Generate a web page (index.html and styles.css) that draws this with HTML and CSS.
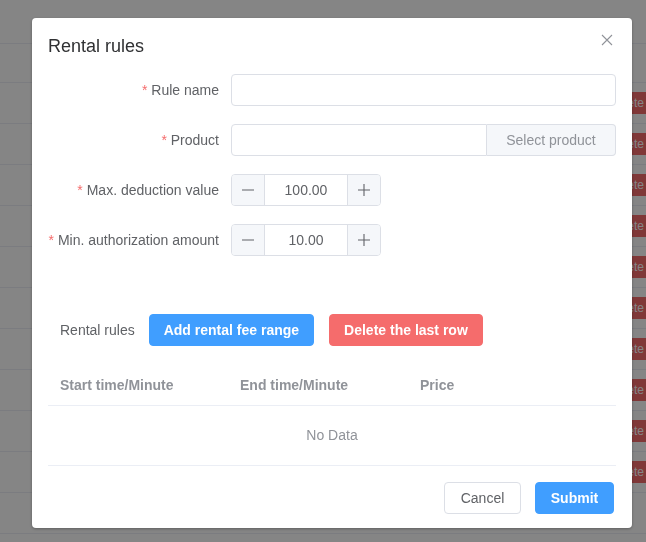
FILE: index.html
```html
<!DOCTYPE html>
<html lang="en">
<head>
  <meta charset="UTF-8" />
  <title>Rental rules</title>
  <link rel="stylesheet" href="styles.css">
</head>
<body>

  <div class="page">
    <div class="page-head"></div>
    <div class="page-row page-row-first"></div>
    <div class="page-row"><span class="row-btn">Delete</span></div>
    <div class="page-row"><span class="row-btn">Delete</span></div>
    <div class="page-row"><span class="row-btn">Delete</span></div>
    <div class="page-row"><span class="row-btn">Delete</span></div>
    <div class="page-row"><span class="row-btn">Delete</span></div>
    <div class="page-row"><span class="row-btn">Delete</span></div>
    <div class="page-row"><span class="row-btn">Delete</span></div>
    <div class="page-row"><span class="row-btn">Delete</span></div>
    <div class="page-row"><span class="row-btn">Delete</span></div>
    <div class="page-row"><span class="row-btn">Delete</span></div>
    <div class="page-row"></div>
  </div>

  <div class="overlay">
    <div class="dialog">
      <div class="dialog-header">
        <span class="dialog-title">Rental rules</span>
        <button class="dialog-close" aria-label="Close">
          <svg width="12" height="12" viewBox="0 0 12 12">
            <path d="M1 1L11 11M11 1L1 11" stroke="#909399" stroke-width="1.1" fill="none"/>
          </svg>
        </button>
      </div>

      <form class="form">
        <div class="form-item">
          <label class="form-label"><span class="req">*</span> Rule name</label>
          <div class="form-content">
            <input class="input" type="text" />
          </div>
        </div>

        <div class="form-item">
          <label class="form-label"><span class="req">*</span> Product</label>
          <div class="form-content">
            <div class="input-group">
              <input class="input input-left" type="text" />
              <span class="input-append">Select product</span>
            </div>
          </div>
        </div>

        <div class="form-item">
          <label class="form-label"><span class="req">*</span> Max. deduction value</label>
          <div class="form-content">
            <div class="number">
              <span class="number-btn minus">
                <svg width="14" height="14" viewBox="0 0 14 14"><path d="M1 7H13" stroke="#606266" stroke-width="1.1"/></svg>
              </span>
              <span class="number-value">100.00</span>
              <span class="number-btn plus">
                <svg width="14" height="14" viewBox="0 0 14 14"><path d="M1 7H13M7 1V13" stroke="#606266" stroke-width="1.1"/></svg>
              </span>
            </div>
          </div>
        </div>

        <div class="form-item">
          <label class="form-label"><span class="req">*</span> Min. authorization amount</label>
          <div class="form-content">
            <div class="number">
              <span class="number-btn minus">
                <svg width="14" height="14" viewBox="0 0 14 14"><path d="M1 7H13" stroke="#606266" stroke-width="1.1"/></svg>
              </span>
              <span class="number-value">10.00</span>
              <span class="number-btn plus">
                <svg width="14" height="14" viewBox="0 0 14 14"><path d="M1 7H13M7 1V13" stroke="#606266" stroke-width="1.1"/></svg>
              </span>
            </div>
          </div>
        </div>
      </form>

      <div class="rules-bar">
        <span class="rules-label">Rental rules</span>
        <button class="btn btn-primary">Add rental fee range</button>
        <button class="btn btn-danger">Delete the last row</button>
      </div>

      <table class="rules-table">
        <thead>
          <tr>
            <th>Start time/Minute</th>
            <th>End time/Minute</th>
            <th>Price</th>
          </tr>
        </thead>
        <tbody>
          <tr>
            <td colspan="3" class="empty">No Data</td>
          </tr>
        </tbody>
      </table>

      <div class="dialog-footer">
        <button class="btn btn-default">Cancel</button>
        <button class="btn btn-primary">Submit</button>
      </div>
    </div>
  </div>

</body>
</html>
```

FILE: styles.css
```css
* {
  box-sizing: border-box;
}

html, body {
  height: 100%;
}

body {
  margin: 0;
  font-family: "Liberation Sans", Arial, Helvetica, sans-serif;
  font-size: 14px;
  color: #606266;
  background: #fff;
  overflow: hidden;
}

/* page behind the dialog */
.page-head {
  height: 44px;
  border-bottom: 1px solid #ebeef5;
}

.page-row {
  height: 41px;
  border-bottom: 1px solid #ebeef5;
  display: flex;
  align-items: center;
  justify-content: flex-end;
}

.page-row-first {
  height: 39px;
}

.row-btn {
  background: #f56c6c;
  color: #fff;
  font-size: 12px;
  height: 22px;
  line-height: 22px;
  padding: 0 7px;
  border-radius: 3px;
  margin-right: -5px;
}

/* modal */
.overlay {
  position: fixed;
  inset: 0;
  background: rgba(0, 0, 0, 0.48);
}

.dialog {
  width: 600px;
  margin: 18px 0 0 32px;
  background: #fff;
  border-radius: 4px;
  box-shadow: 0 1px 3px rgba(0, 0, 0, 0.3);
  padding: 16px 16px 14px;
}

.dialog-header {
  position: relative;
  height: 24px;
  margin-bottom: 16px;
}

.dialog-title {
  font-size: 18px;
  line-height: 24px;
  color: #303133;
}

.dialog-close {
  position: absolute;
  top: -2px;
  right: 1px;
  border: none;
  background: none;
  padding: 0;
  width: 16px;
  height: 16px;
  display: flex;
  align-items: center;
  justify-content: center;
  cursor: pointer;
}

.form-item {
  display: flex;
  align-items: center;
  height: 32px;
  margin-bottom: 18px;
}

.form-label {
  width: 183px;
  padding-right: 12px;
  text-align: right;
  flex-shrink: 0;
  color: #606266;
}

.req {
  color: #f56c6c;
}

.form-content {
  flex: 1;
}

.input {
  width: 100%;
  height: 32px;
  border: 1px solid #dcdfe6;
  border-radius: 4px;
  padding: 0 15px;
  font: inherit;
  color: #606266;
  outline: none;
}

.input-group {
  display: flex;
}

.input-left {
  border-radius: 4px 0 0 4px;
}

.input-append {
  flex-shrink: 0;
  width: 129px;
  height: 32px;
  line-height: 30px;
  text-align: center;
  background: #f5f7fa;
  color: #909399;
  border: 1px solid #dcdfe6;
  border-left: none;
  border-radius: 0 4px 4px 0;
}

.number {
  display: flex;
  width: 150px;
  height: 32px;
  border: 1px solid #dcdfe6;
  border-radius: 4px;
  overflow: hidden;
}

.number-btn {
  width: 33px;
  background: #f5f7fa;
  display: flex;
  align-items: center;
  justify-content: center;
}

.minus {
  border-right: 1px solid #dcdfe6;
}

.plus {
  border-left: 1px solid #dcdfe6;
}

.number-value {
  flex: 1;
  text-align: center;
  line-height: 30px;
  color: #606266;
}

/* rental rules */
.rules-bar {
  display: flex;
  align-items: center;
  margin-top: 58px;
  padding-left: 12px;
}

.rules-label {
  margin-right: 14px;
}

.btn {
  height: 32px;
  padding: 0 14px;
  border-radius: 4px;
  border: 1px solid transparent;
  font: inherit;
  font-weight: bold;
  cursor: pointer;
}

.btn + .btn {
  margin-left: 15px;
}

.btn-primary {
  background: #409eff;
  border-color: #409eff;
  color: #fff;
}

.btn-danger {
  background: #f56c6c;
  border-color: #f56c6c;
  color: #fff;
}

.btn-default {
  background: #fff;
  border-color: #dcdfe6;
  color: #606266;
  font-weight: normal;
  width: 77px;
  padding: 0;
}

.rules-table {
  width: 100%;
  border-collapse: collapse;
  margin-top: 19px;
}

.rules-table th {
  height: 40px;
  width: 180px;
  text-align: left;
  padding: 0 12px;
  color: #909399;
  font-weight: bold;
  border-bottom: 1px solid #ebeef5;
}

.rules-table th:last-child {
  width: auto;
}

.rules-table .empty {
  height: 60px;
  text-align: center;
  color: #909399;
  border-bottom: 1px solid #ebeef5;
}

.dialog-footer {
  display: flex;
  justify-content: flex-end;
  padding-top: 16px;
  padding-right: 2px;
}

.dialog-footer .btn-primary {
  width: 79px;
  padding: 0;
}

.dialog-footer .btn + .btn {
  margin-left: 14px;
}
```
